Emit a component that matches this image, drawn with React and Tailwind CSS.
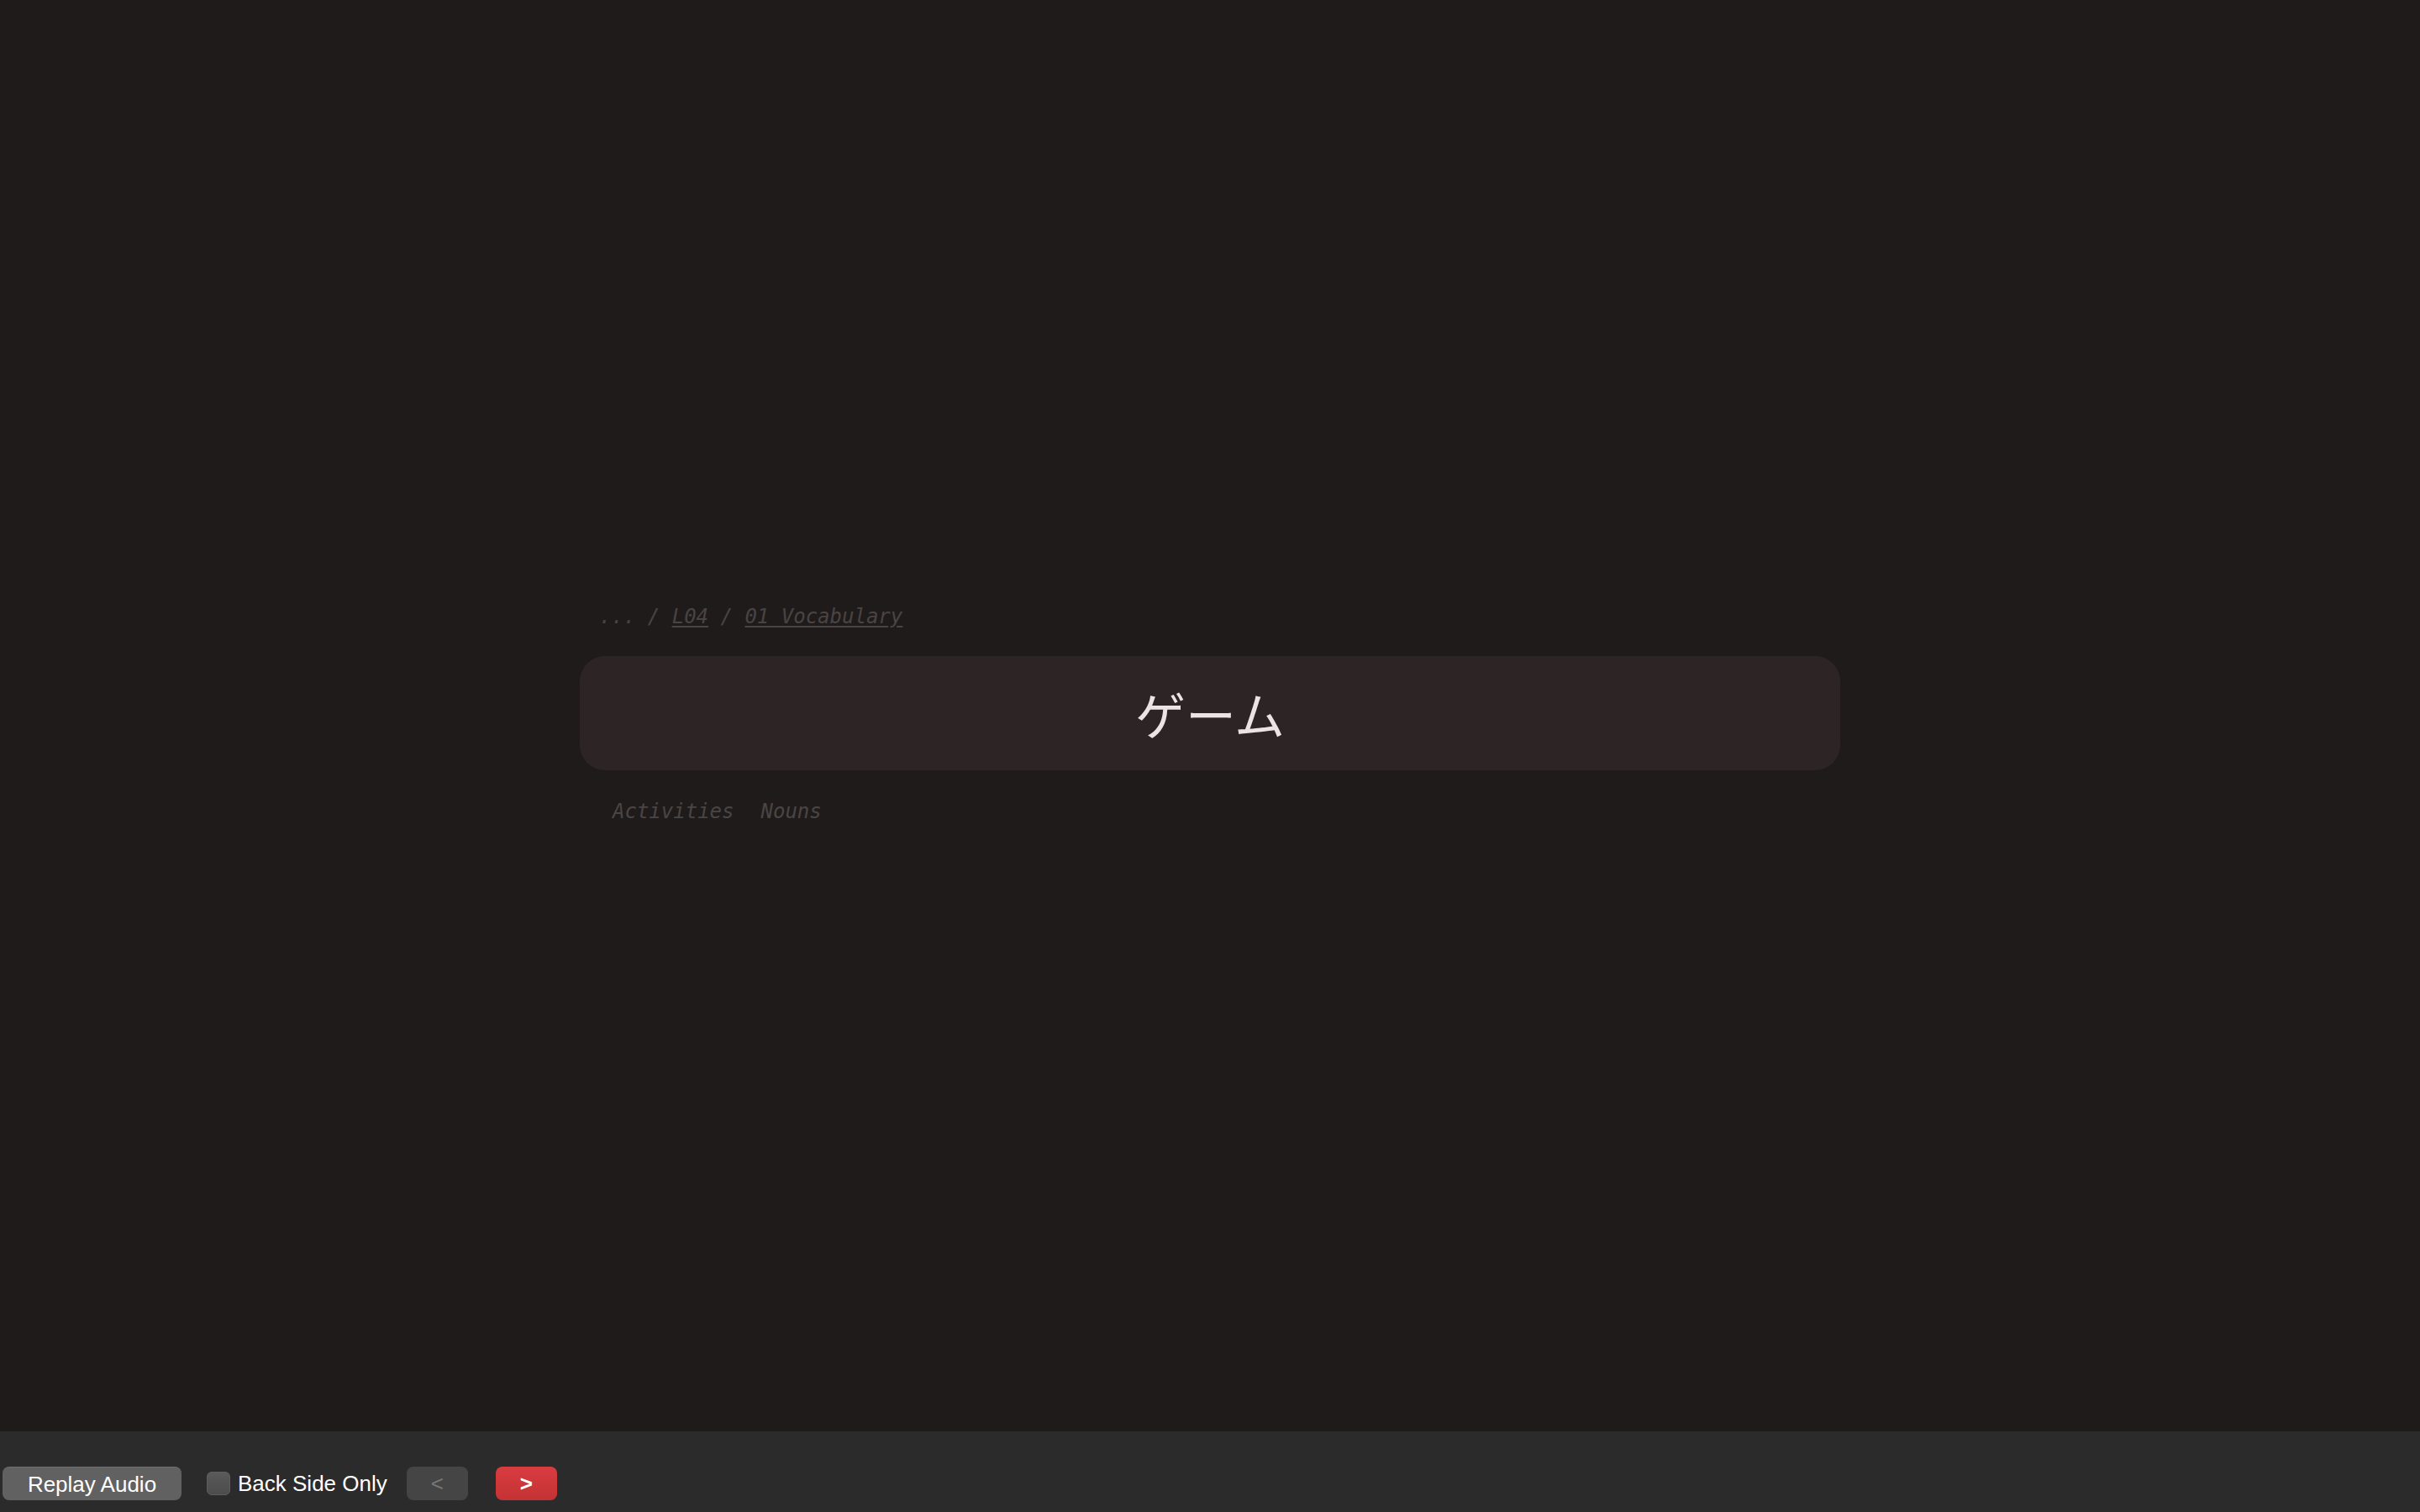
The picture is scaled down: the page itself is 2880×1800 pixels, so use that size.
export default function App() {
  const mono = { fontFamily: '"DejaVu Sans Mono", "Liberation Mono", monospace' };
  return (
    <div className="w-[2880px] h-[1800px] bg-[#201b1b] flex flex-col overflow-hidden">
      <main className="h-[1704px] flex flex-col items-center justify-center pb-[4px]">
        <div className="w-[1500px] flex flex-col">
          <div
            className="pl-[23px] h-[32px] leading-[32px] text-[24px] italic text-[#4a4343] whitespace-pre"
            style={mono}
          >
            <span>... / </span>
            <span className="underline underline-offset-[3px]">L04</span>
            <span> / </span>
            <span className="underline underline-offset-[3px]">01 Vocabulary</span>
          </div>
          <div className="mt-[31px] h-[136px] rounded-[30px] bg-[#2c2425] flex items-center justify-center">
            <span
              className="text-[60px] text-[#ece4e4] leading-none"
              style={{ fontFamily: '"Noto Sans CJK JP", sans-serif' }}
            >
              ゲーム
            </span>
          </div>
          <div
            className="mt-[33px] pl-[23px] h-[32px] leading-[32px] text-[24px] italic text-[#4a4545] flex"
            style={mono}
          >
            <span className="px-4">Activities</span>
            <span className="px-4">Nouns</span>
          </div>
        </div>
      </main>
      <footer
        className="h-[96px] bg-[#2b2b2b] pt-[42px] pl-[3px] flex items-start"
        style={{ fontFamily: '"Liberation Sans", Arial, sans-serif' }}
      >
        <button className="w-[213px] h-[40px] rounded-[8px] bg-[#616161] border-t border-[#6f6f6f] text-white text-[26px] leading-none flex items-center justify-center">
          Replay Audio
        </button>
        <label className="ml-[30px] h-[40px] flex items-center gap-[9px] text-white text-[26px]">
          <span className="w-[28px] h-[28px] rounded-[6px] bg-gradient-to-b from-[#5a5a5a] to-[#4c4c4c] border border-[#5e5e5e]"></span>
          <span>Back Side Only</span>
        </label>
        <button className="ml-[23px] w-[73px] h-[40px] rounded-[8px] bg-[#454545] text-[#777777] text-[26px] leading-none flex items-center justify-center">
          &lt;
        </button>
        <button className="ml-[33px] w-[73px] h-[40px] rounded-[8px] bg-gradient-to-b from-[#d83c40] to-[#c53234] text-white text-[26px] font-bold leading-none flex items-center justify-center">
          &gt;
        </button>
      </footer>
    </div>
  );
}
